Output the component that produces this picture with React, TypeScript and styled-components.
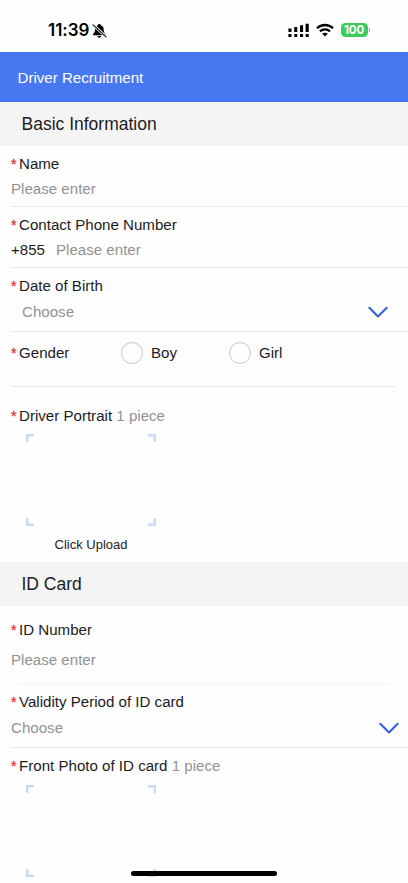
import React from 'react';
import styled, { createGlobalStyle } from 'styled-components';

const GlobalStyle = createGlobalStyle`
  * { box-sizing: border-box; }
  body {
    margin: 0;
    background: #fefefe;
    font-family: 'Liberation Sans', Arial, sans-serif;
    overflow: hidden;
  }
`;

const Screen = styled.main`
  display: flex;
  flex-direction: column;
  width: 408px;
  height: 883px;
  overflow: hidden;
  background: #fefefe;
  color: #1c1c1e;
  font-size: 15.1px;
  line-height: 20px;
`;

const StatusBar = styled.div`
  display: flex;
  flex: none;
  justify-content: space-between;
  align-items: flex-start;
  height: 52px;
  padding: 20px 38px 0 48px;
`;

const Clock = styled.div`
  display: flex;
  align-items: center;
  gap: 3px;
  height: 21px;
  font: 600 17px/21px Inter, sans-serif;
  letter-spacing: -0.05px;
  color: #000;
`;

const StatusIcons = styled.div`
  display: flex;
  align-items: center;
  height: 20px;
`;

const SignalIcon = styled.svg`
  width: 21px;
  height: 15px;
  margin-right: 7px;
`;

const WifiIcon = styled.svg`
  width: 18px;
  height: 14px;
  margin-right: 7px;
`;

const Battery = styled.div`
  display: flex;
  align-items: center;
  gap: 1px;
`;

const BatteryBody = styled.div`
  width: 27px;
  height: 14px;
  border-radius: 4.5px;
  background: #3fca5c;
  color: #fff;
  font: 700 11.5px/14px Inter, sans-serif;
  letter-spacing: -0.1px;
  text-align: center;
`;

const BatteryTip = styled.div`
  width: 1.5px;
  height: 4px;
  border-radius: 0 2px 2px 0;
  background: #3fca5c;
`;

const TitleBar = styled.header`
  flex: none;
  height: 50px;
  padding: 16px 17.5px;
  background: #4778f1;
  color: #fff;
`;

const SectionTitle = styled.h2`
  flex: none;
  height: 44px;
  margin: 0;
  padding-left: 21.5px;
  background: #f4f4f4;
  font-size: 17.5px;
  font-weight: 400;
  line-height: 44px;
`;

const Field = styled.section<{ $height: number; $top?: number; $gap?: number; $left?: number; $right?: number; $faint?: boolean }>`
  display: flex;
  flex: none;
  flex-direction: column;
  gap: ${p => p.$gap ?? 5}px;
  height: ${p => p.$height}px;
  padding: ${p => p.$top ?? 8}px 0 0 11px;

  &::after {
    content: '';
    height: 1px;
    margin: auto ${p => p.$right ?? 0}px 0 ${p => p.$left ?? 0}px;
    background: ${p => (p.$faint ? '#f3f3f3' : '#e9e9ea')};
  }
`;

const Label = styled.div`
  display: flex;
  flex: none;
  height: 20px;
  white-space: pre;
`;

const Star = styled.span`
  width: 8px;
  color: #e0343f;
  font-size: 14px;
  -webkit-text-stroke: 0.3px #e0343f;
`;

const Hint = styled.span`
  color: #929292;
`;

const ValueRow = styled.div<{ $indent?: number; $right?: number }>`
  display: flex;
  align-items: center;
  height: 20px;
  padding: 0 ${p => p.$right ?? 0}px 0 ${p => p.$indent ?? 0}px;
`;

const CountryCode = styled.span`
  width: 45px;
`;

const Chevron = styled.svg`
  width: 20px;
  height: 12px;
  margin-left: auto;
  transform: translateY(0.5px);
`;

const GenderRow = styled.div`
  display: flex;
  align-items: center;
  height: 22px;
`;

const GenderLabel = styled(Label)`
  width: 110px;
`;

const Option = styled.label`
  display: flex;
  align-items: center;
  gap: 8px;
  width: 108px;
`;

const Radio = styled.span`
  width: 22px;
  height: 22px;
  border: 1px solid #c6c6c6;
  border-radius: 50%;
`;

const Upload = styled.div`
  display: flex;
  flex: none;
  flex-direction: column;
  align-items: center;
  width: 130px;
  margin-left: 15px;
`;

const Frame = styled.svg`
  width: 130px;
  height: 92px;
`;

const UploadText = styled.span`
  margin-top: 8.5px;
  font-size: 13px;
  line-height: 20px;
`;

const HomeIndicator = styled.div`
  position: fixed;
  left: 131px;
  top: 870.5px;
  width: 146px;
  height: 5px;
  border-radius: 3px;
  background: #000;
`;

function FieldLabel({ text, hint }: { text: string; hint?: string }) {
  return (
    <Label>
      <Star>*</Star>
      <span>{text}{hint && <Hint> {hint}</Hint>}</span>
    </Label>
  );
}

function DownArrow() {
  return (
    <Chevron viewBox="0 0 20 12" fill="none">
      <path d="M1.3 1.3 10 9.9l8.7-8.6" stroke="#2f62dc" strokeWidth="2.1" strokeLinecap="round" strokeLinejoin="round" />
    </Chevron>
  );
}

function UploadFrame() {
  return (
    <Frame viewBox="0 0 130 92" fill="none" stroke="#c9daf3" strokeWidth="2.4">
      <path d="M1.2 8V1.2H8M122 1.2h6.800V8M1.200 84v6.800H8M122 90.800h6.800V84" />
    </Frame>
  );
}

function BellOff() {
  return (
    <svg width="15" height="16" viewBox="0 0 15 16">
      <path d="M7.2 1C6.3 1 5.8 1.6 5.7 2.3 3.8 3 3 4.5 3 6.5c0 2.7-.9 3.7-1.8 4.5-.5.5-.3 1.2.4 1.2h11.5c.7 0 .9-.7.4-1.2-.9-.8-1.8-1.8-1.8-4.5 0-2-.9-3.500-2.8-4.200C8.800 1.600 8.200 1 7.200 1ZM5.400 13.100c.2 1 .9 1.600 1.900 1.600s1.700-.6 1.900-1.600Z" fill="#000" />
      <path d="M1 1.800 14 13.800" stroke="#fff" strokeWidth="2.800" />
      <path d="M1 1.800 14 13.800" stroke="#000" strokeWidth="1.100" strokeLinecap="round" />
    </svg>
  );
}

function StatusIndicators() {
  return (
    <StatusIcons>
      <SignalIcon viewBox="0 0 21 15">
        <path d="M.4 5.600h3.100V9H.4zM6.200 4h3.100v5H6.200zM12 2.300h3.100V9H12zM17.600.8h3.100V9h-3.100zM.4 11h3.100v3H.4zM6.200 11h3.100v3H6.200zM12 11h3.100v3H12zM17.600 11h3.100v3h-3.100z" />
      </SignalIcon>
      <WifiIcon viewBox="0 0 18 14" fill="none" stroke="#000" strokeWidth="2.300">
        <path d="M1 5.200C5.400.9 12.600.9 17 5.200M4 8.400c2.800-2.700 7.200-2.700 10 0" />
        <path d="M6.200 10.700c1.500-1.300 4.100-1.300 5.600 0L9 13.500Z" fill="#000" stroke="none" />
      </WifiIcon>
      <Battery><BatteryBody>100</BatteryBody><BatteryTip /></Battery>
    </StatusIcons>
  );
}

export default function App() {
  return (
    <>
      <GlobalStyle />
      <Screen>
        <StatusBar>
          <Clock><span>11:39</span><BellOff /></Clock>
          <StatusIndicators />
        </StatusBar>
        <TitleBar>Driver Recruitment</TitleBar>
        <SectionTitle>Basic Information</SectionTitle>
        <Field $height={61}>
          <FieldLabel text="Name" />
          <ValueRow><Hint>Please enter</Hint></ValueRow>
        </Field>
        <Field $height={61}>
          <FieldLabel text="Contact Phone Number" />
          <ValueRow><CountryCode>+855</CountryCode><Hint>Please enter</Hint></ValueRow>
        </Field>
        <Field $height={64} $gap={6}>
          <FieldLabel text="Date of Birth" />
          <ValueRow $indent={11} $right={20.5}><Hint>Choose</Hint><DownArrow /></ValueRow>
        </Field>
        <Field $height={55} $top={10} $right={12}>
          <GenderRow>
            <GenderLabel><Star>*</Star>Gender</GenderLabel>
            <Option><Radio />Boy</Option>
            <Option><Radio />Girl</Option>
          </GenderRow>
        </Field>
        <Field $height={175} $top={19} $gap={8}>
          <FieldLabel text="Driver Portrait" hint="1 piece" />
          <Upload><UploadFrame /><UploadText>Click Upload</UploadText></Upload>
        </Field>
        <SectionTitle>ID Card</SectionTitle>
        <Field $height={78} $top={14} $gap={10} $left={7} $right={17} $faint>
          <FieldLabel text="ID Number" />
          <ValueRow><Hint>Please enter</Hint></ValueRow>
        </Field>
        <Field $height={64} $gap={6}>
          <FieldLabel text="Validity Period of ID card" />
          <ValueRow $right={9.5}><Hint>Choose</Hint><DownArrow /></ValueRow>
        </Field>
        <Field $height={175} $gap={9}>
          <FieldLabel text="Front Photo of ID card" hint="1 piece" />
          <Upload><UploadFrame /></Upload>
        </Field>
        <HomeIndicator />
      </Screen>
    </>
  );
}
